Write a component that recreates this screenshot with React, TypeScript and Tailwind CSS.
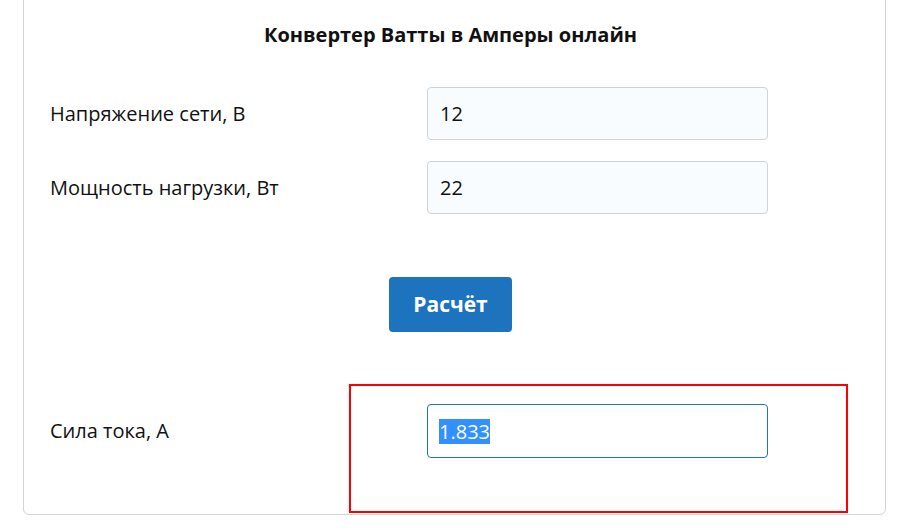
export default function App() {
  return (
    <div className="relative w-[915px] h-[530px] bg-white overflow-hidden font-['Open_Sans',_sans-serif] text-[#111]">
      <div className="ml-[23px] mt-[-6px] w-[863px] h-[521px] border border-[#d4d4d4] rounded-[6px] pt-[27px]">
        <h1 className="h-[26px] leading-[26px] text-center text-[20px] font-bold text-[#111] pr-[8px]">
          Конвертер Ватты в Амперы онлайн
        </h1>
        <div className="mt-[39px] flex items-center pl-[26px]">
          <div className="w-[377px] text-[20px]">Напряжение сети, В</div>
          <div className="w-[341px] h-[53px] rounded-[4px] border border-[#cfd3d6] bg-[#f8fcff] flex items-center pl-[12px] text-[20px]">
            12
          </div>
        </div>
        <div className="mt-[21px] flex items-center pl-[26px]">
          <div className="w-[377px] text-[20px]">Мощность нагрузки, Вт</div>
          <div className="w-[341px] h-[53px] rounded-[4px] border border-[#cfd3d6] bg-[#f8fcff] flex items-center pl-[12px] text-[20px]">
            22
          </div>
        </div>
        <div className="mt-[63px] flex justify-center pr-[8px]">
          <button className="w-[123px] h-[55px] rounded-[4px] bg-[#1e73be] text-white text-[21px] font-bold">
            Расчёт
          </button>
        </div>
        <div className="mt-[72px] flex items-center pl-[26px]">
          <div className="w-[377px] text-[20px]">Сила тока, А</div>
          <div className="w-[341px] h-[54px] rounded-[4px] border border-[#1e73be] bg-white flex items-center pl-[11px] text-[20px]">
            <span className="bg-[#3390ff] text-white leading-[25px]">1.833</span>
          </div>
        </div>
      </div>
      <div className="absolute left-[349px] top-[384px] w-[499px] h-[129px] border-2 border-[#ff0000]" />
    </div>
  );
}
